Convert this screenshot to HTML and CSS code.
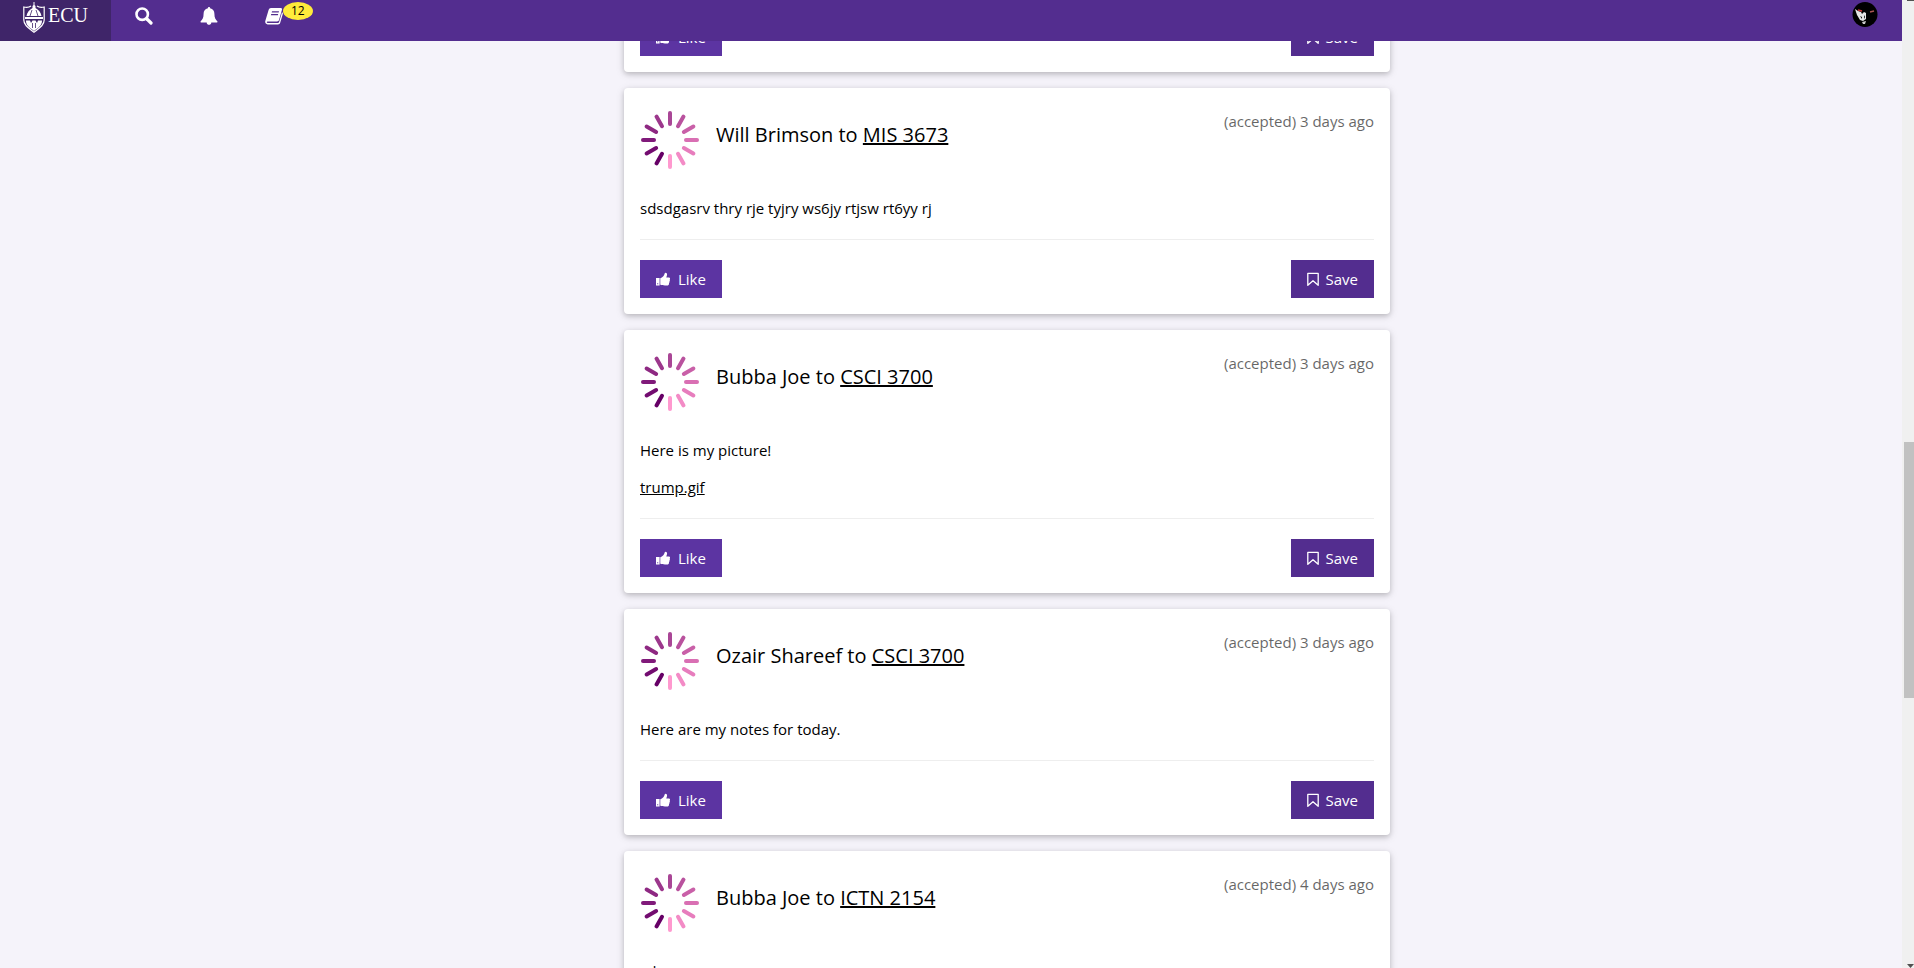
FILE: index.html
```html
<!DOCTYPE html>
<html lang="en">
<head>
<meta charset="utf-8">
<title>ECU Feed</title>
<link rel="stylesheet" href="styles.css">
</head>
<body>
<svg class="defs" aria-hidden="true">
  <symbol id="i-spinner" viewBox="0 0 60 60">
    <g stroke-width="4" stroke-linecap="round">
      <path stroke="#a94696" d="M30 3v11"/>
      <path stroke="#b9529e" d="M30 3v11" transform="rotate(30 30 30)"/>
      <path stroke="#c960a8" d="M30 3v11" transform="rotate(60 30 30)"/>
      <path stroke="#d96fb3" d="M30 3v11" transform="rotate(90 30 30)"/>
      <path stroke="#e77dbd" d="M30 3v11" transform="rotate(120 30 30)"/>
      <path stroke="#f38bc6" d="M30 3v11" transform="rotate(150 30 30)"/>
      <path stroke="#ff99cf" d="M30 3v11" transform="rotate(180 30 30)"/>
      <path stroke="#660066" d="M30 3v11" transform="rotate(210 30 30)"/>
      <path stroke="#730c70" d="M30 3v11" transform="rotate(240 30 30)"/>
      <path stroke="#801a7a" d="M30 3v11" transform="rotate(270 30 30)"/>
      <path stroke="#8e2882" d="M30 3v11" transform="rotate(300 30 30)"/>
      <path stroke="#9c378c" d="M30 3v11" transform="rotate(330 30 30)"/>
    </g>
  </symbol>
  <symbol id="i-thumb" viewBox="0 0 14 14">
    <path fill="currentColor" fill-rule="evenodd" d="M0 6h3.600v7.500H0zM1.200 11.300v1h1v-1zM4.300 6.200c1.700-.4 2.900-1.600 3.700-2.900C8.600 2.300 8.500.9 9.500.7c1.600 0 1.800 1.700 1.400 2.900L10.300 5.500H13c1.200.1 1.300 1.300.7 1.900.4.700.3 1.500-.2 1.900.2.700 0 1.400-.5 1.700.2 1.700-.6 2.500-2 2.500H9C7 13.500 5.800 12.900 4.300 12.800z"/>
  </symbol>
  <symbol id="i-mark" viewBox="0 0 12 14">
    <path fill="none" stroke="currentColor" stroke-width="1.300" stroke-linejoin="round" d="M.8 1.400h10.400v11.900L6 8.800.8 13.300z"/>
  </symbol>
</svg>

<div class="page">
  <nav class="bar">
    <a class="brand" href="#" aria-label="ECU home">
      <svg class="shield" viewBox="0 0 22 31" aria-hidden="true">
        <path fill="none" stroke="#fff" stroke-width="1.200" d="M8 4C6 5.500 3 5.500.8 5v13c0 5.500 5.500 8.500 10.200 12.200C15.700 26.500 21.200 23.500 21.200 18V5C19 5.500 16 5.500 14 4"/>
        <path fill="#fff" d="M10.500 0h1v3l1 1v2c3 1.500 5.500 4.500 6 8H3.500c.5-3.500 3-6.500 6-8V4l1-1zM2 15h18v2H2zM3 18.500h4l1 2.500 1.500-2.500h3L14 21l1-2.500h4c0 4-2 5.500-4 7.500-1.500 1-3 2-4 3-1-1-2.500-2-4-3-2-2-4-3.500-4-7.500z"/>
        <path fill="none" stroke="#3f2569" stroke-width=".8" d="M9 8 7 14M13 8l2 6M9.500 21v5M12.500 21v5"/>
      </svg>
      <span>ECU</span>
    </a>
    <a class="item" href="#" aria-label="Search">
      <svg width="18" height="18" viewBox="0 0 18 18" aria-hidden="true"><g fill="none" stroke="#fff"><circle cx="7.200" cy="7.200" r="5.700" stroke-width="2.600"/><path stroke-width="3.200" stroke-linecap="round" d="m12 12 4 4"/></g></svg>
    </a>
    <a class="item" href="#" aria-label="Notifications">
      <svg width="18" height="18" viewBox="0 0 18 18" aria-hidden="true"><path fill="#fff" d="M9 0c.8 0 1.200.6 1.100 1.300C13 1.900 14.400 4 14.400 6.800c0 4 1.200 6 3.100 7.600 0 .8-.5 1.200-1.200 1.200H11.300c0 1.300-1 2.300-2.300 2.300s-2.300-1-2.300-2.300H1.700c-.7 0-1.200-.4-1.200-1.200 1.900-1.600 3.100-3.600 3.100-7.600C3.600 4 5 1.900 7.900 1.300 7.800.6 8.200 0 9 0z"/></svg>
    </a>
    <a class="item" href="#" aria-label="Courses, 12 new">
      <svg width="18" height="18" viewBox="0 0 18 18" aria-hidden="true"><path fill="#fff" fill-rule="evenodd" d="M6 1h9.500c1.200 0 1.700.8 1.400 1.900L14 13c-.3 1-1 1.400-2 1.400H2.500c-1 0-1 1.600.2 1.600H13c.6 0 .9-.2 1.100-.9L17 5.200c.9.500 1 1.200.8 1.900l-2.600 8.600c-.4 1.200-1.100 1.700-2.200 1.700H2.600C.9 17.400-.2 15.700.3 14L3.600 3C4 1.700 4.700 1 6 1zM7 4.200 6.700 5.400h7L14 4.200zM6.200 7l-.3 1.200h7l.3-1.200z"/></svg>
      <span class="badge">12</span>
    </a>
    <a class="avatar" href="#" aria-label="My account">
      <svg width="26" height="26" viewBox="0 0 26 26" aria-hidden="true"><circle cx="13" cy="13.500" r="12.500"/><path fill="#e4e4e4" d="m3 8 3 2 3 1 1 2 2-2 2 1v6l-3 2-3-1-3-5z"/><path fill="#ccc" d="m10 21 4-1-1 3h-2z"/><path fill="#000" d="m8 15 2 1v2zM12 14l1 2-1 2z"/><path stroke="#c33" stroke-width="1.500" d="m6 9 4 1"/><path stroke="#a55" stroke-width="1.500" d="m18 11 4-1"/></svg>
    </a>
  </nav>

  <main class="layout">
    <div class="feed">
      <article class="card">
        <div class="actions">
          <button class="btn like" type="button"><svg aria-hidden="true"><use href="#i-thumb"/></svg>Like</button>
          <button class="btn save" type="button"><svg aria-hidden="true"><use href="#i-mark"/></svg>Save</button>
        </div>
      </article>

      <article class="card">
        <header class="head">
          <svg class="face" aria-hidden="true"><use href="#i-spinner"/></svg>
          <h2>Will Brimson to <a href="#">MIS 3673</a></h2>
          <span class="when">(accepted) 3 days ago</span>
        </header>
        <p>sdsdgasrv thry rje tyjry ws6jy rtjsw rt6yy rj</p>
        <hr>
        <div class="actions">
          <button class="btn like" type="button"><svg aria-hidden="true"><use href="#i-thumb"/></svg>Like</button>
          <button class="btn save" type="button"><svg aria-hidden="true"><use href="#i-mark"/></svg>Save</button>
        </div>
      </article>

      <article class="card">
        <header class="head">
          <svg class="face" aria-hidden="true"><use href="#i-spinner"/></svg>
          <h2>Bubba Joe to <a href="#">CSCI 3700</a></h2>
          <span class="when">(accepted) 3 days ago</span>
        </header>
        <p>Here is my picture!</p>
        <p><a href="#">trump.gif</a></p>
        <hr>
        <div class="actions">
          <button class="btn like" type="button"><svg aria-hidden="true"><use href="#i-thumb"/></svg>Like</button>
          <button class="btn save" type="button"><svg aria-hidden="true"><use href="#i-mark"/></svg>Save</button>
        </div>
      </article>

      <article class="card">
        <header class="head">
          <svg class="face" aria-hidden="true"><use href="#i-spinner"/></svg>
          <h2>Ozair Shareef to <a href="#">CSCI 3700</a></h2>
          <span class="when">(accepted) 3 days ago</span>
        </header>
        <p>Here are my notes for today.</p>
        <hr>
        <div class="actions">
          <button class="btn like" type="button"><svg aria-hidden="true"><use href="#i-thumb"/></svg>Like</button>
          <button class="btn save" type="button"><svg aria-hidden="true"><use href="#i-mark"/></svg>Save</button>
        </div>
      </article>

      <article class="card">
        <header class="head">
          <svg class="face" aria-hidden="true"><use href="#i-spinner"/></svg>
          <h2>Bubba Joe to <a href="#">ICTN 2154</a></h2>
          <span class="when">(accepted) 4 days ago</span>
        </header>
        <p>sdgs</p>
      </article>
    </div>
  </main>
</div>
<div class="scroll" aria-hidden="true">
  <svg class="arrow" viewBox="0 0 7 4"><path fill="#505050" d="M0 0h7v1H0z"/></svg>
  <div class="before"></div>
  <div class="thumb"></div>
  <div class="after"></div>
  <svg class="arrow" viewBox="0 0 7 4"><path fill="#505050" d="M0 0h7L3.500 4z"/></svg>
</div>
</body>
</html>
```
FILE: styles.css
```css
* { box-sizing: border-box; }

body {
  margin: 0;
  height: 100vh;
  overflow: hidden;
  display: flex;
  background: #f5f3fa;
  color: #000;
  font: 15px/22px "Open Sans", sans-serif;
}

a { color: inherit; }
.defs { position: absolute; width: 0; height: 0; }

.page {
  flex: 1;
  min-width: 0;
  display: flex;
  flex-direction: column;
}

.bar {
  flex: none;
  height: 41px;
  display: flex;
  align-items: flex-start;
  background: #532d8f;
  color: #fff;
}

.brand {
  align-self: stretch;
  width: 111px;
  display: flex;
  gap: 3px;
  padding: 2px 0 0 23px;
  background: #3f2569;
  text-decoration: none;
  font: 20px/26px "Liberation Serif", serif;
}

.shield { width: 22px; height: 31px; }

.item {
  display: flex;
  padding: 7px 23px 0 24px;
  text-decoration: none;
}

.item svg { flex: none; }

.badge {
  margin-top: -5px;
  padding: 0 8px;
  height: 18px;
  border-radius: 50%;
  background: #ffeb3b;
  color: #000;
  font-size: 12px;
  line-height: 18px;
}

.avatar { margin: 1px 24px 0 auto; }

.layout {
  flex: 1;
  min-height: 0;
  overflow: hidden;
  width: 100%;
  max-width: 1400px;
  margin: 0 auto;
  display: grid;
  grid-template-columns: 373fr 766fr 261fr;
}

.feed {
  grid-column: 2;
  display: flex;
  flex-direction: column;
  gap: 16px;
  margin-top: -39px;
}

.card {
  padding: 16px;
  border-radius: 4px;
  background: #fff;
  box-shadow: 0 2px 5px rgba(0, 0, 0, .16), 0 2px 10px rgba(0, 0, 0, .12);
}

.head {
  display: flex;
  align-items: flex-start;
  gap: 16px;
  padding-top: 6px;
  margin-bottom: 27px;
}

.face { width: 60px; height: 60px; flex: none; }

.head h2 {
  flex: 1;
  margin: 10px 0;
  font-size: 20px;
  font-weight: 400;
  line-height: 30px;
}

.when { opacity: .6; }

.card p { margin: 0 0 15px; }

hr {
  margin: 20px 0;
  border: 0;
  border-top: 1px solid #eee;
}

.actions { display: flex; justify-content: space-between; }

.btn {
  display: flex;
  align-items: center;
  gap: 8px;
  padding: 8px 16px;
  border: 0;
  color: #fff;
  font: inherit;
}

.btn svg { width: 14px; height: 14px; }
.like { background: #5c34a2; }
.save { background: #532d8f; gap: 7px; }
.save svg { width: 12px; }

.scroll {
  width: 12px;
  display: flex;
  flex-direction: column;
  padding-left: 2px;
  background: #f0f0f0;
}

.arrow { flex: none; align-self: flex-end; width: 7px; height: 4px; }
.before { flex: 437; }
.thumb { height: 256px; background: #c1c1c1; }
.after { flex: 266; }
```
